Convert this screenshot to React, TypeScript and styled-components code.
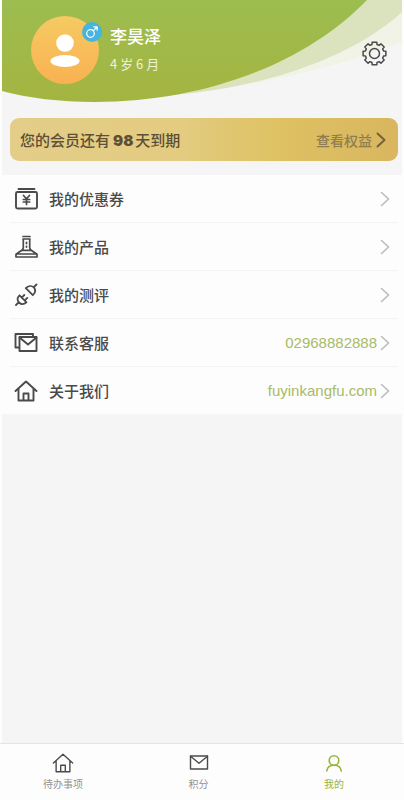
import React from "react";
import styled, { createGlobalStyle } from "styled-components";

const GlobalStyle = createGlobalStyle`
  * { box-sizing: border-box; }
  body {
    margin: 0;
    background: #fdfdfd;
    font-family: Inter, "Noto Sans CJK SC", sans-serif;
    color: #4a4a4a;
  }
  h1, p, ul { margin: 0; padding: 0; }
  button { font: inherit; color: inherit; background: none; border: 0; padding: 0; cursor: pointer; }
  a { color: inherit; text-decoration: none; }
  svg { display: block; flex: none; }
`;

const Page = styled.div`
  display: flex;
  flex-direction: column;
  min-height: 100vh;
  padding: 0 2px;
`;

const Main = styled.main`
  flex: 1;
  background: #f5f5f5;
`;

const Header = styled.header`
  position: relative;
  display: flex;
  align-items: flex-start;
  height: 118px;
  padding: 16px 15px 0 29px;
`;

const Backdrop = styled.svg`
  position: absolute;
  inset: 0;
  width: 100%;
  height: 110px;
`;

const AvatarWrap = styled.div`
  position: relative;
  width: 68px;
  height: 68px;
`;

const GenderBadge = styled.span`
  position: absolute;
  top: 6px;
  right: -3px;
  display: grid;
  place-items: center;
  width: 20px;
  height: 20px;
  border-radius: 50%;
  background: #46b4dc;
`;

const Profile = styled.div`
  position: relative;
  flex: 1;
  margin-left: 11px;
  padding-top: 8px;
  color: #fff;
`;

const Name = styled.h1`
  font-size: 17px;
  line-height: 26px;
  font-weight: 500;
`;

const Age = styled.p`
  margin-top: 3px;
  font-family: "Noto Sans CJK SC", sans-serif;
  font-size: 13px;
  line-height: 22px;
  color: #eef3d3;
`;

const SettingsButton = styled.button`
  position: relative;
  margin-top: 25px;
`;

const MemberCard = styled.section`
  display: flex;
  align-items: center;
  justify-content: space-between;
  height: 43px;
  margin: 0 4px 14px 8px;
  padding: 0 12px 0 10px;
  border-radius: 9px;
  background: linear-gradient(90deg, #e4cd88 0%, #e3cb80 45%, #dec263 68%, #d9b65f 100%);
  font-size: 15px;
  font-weight: 500;
  color: #5c4f36;
`;

const Days = styled.strong`
  margin: 0 2px 0 3px;
  font-weight: 900;
`;

const BenefitsLink = styled.a`
  display: flex;
  align-items: center;
  gap: 4px;
  font-size: 14px;
  font-weight: 500;
  color: #8f7d50;
`;

const Menu = styled.ul`
  list-style: none;
  background: #fdfdfd;
`;

const MenuItem = styled.li`
  margin: 0 4px 0 8px;
  & + & { border-top: 1px solid #f4f4f4; }
`;

const MenuLink = styled.a`
  display: flex;
  align-items: center;
  height: 47px;
  padding: 0 8px 0 4px;
`;

const MenuLabel = styled.span`
  flex: 1;
  margin-left: 11px;
  font-size: 15px;
  font-weight: 500;
`;

const MenuValue = styled.span`
  margin-right: 3px;
  font-family: "Liberation Sans", Arial, sans-serif;
  font-size: 15px;
  color: #a8bb66;
`;

const TabBar = styled.nav`
  display: flex;
  justify-content: space-between;
  height: 57px;
  margin: 0 -2px;
  padding: 0 50px 0 43px;
  border-top: 1px solid #e4e4e4;
`;

const Tab = styled.button<{ $active?: boolean }>`
  width: 40px;
  display: flex;
  flex-direction: column;
  align-items: center;
  padding-top: 8px;
  font-size: 10px;
  line-height: 16px;
  white-space: nowrap;
  color: ${(p) => (p.$active ? "#98b43f" : "#929292")};
  svg { margin-bottom: 2px; color: ${(p) => (p.$active ? "#98b43f" : "#4a4a4a")}; }
`;

const stroke = (width: number) => ({
  fill: "none",
  stroke: "currentColor",
  strokeWidth: width,
  strokeLinecap: "round" as const,
  strokeLinejoin: "round" as const,
  "aria-hidden": true,
});

const Chevron = ({ color = "#b9b9be", width = 1.5 }: { color?: string; width?: number }) => (
  <svg width="10" height="16" viewBox="0 0 10 16" {...stroke(width)} stroke={color}>
    <path d="M1.5 1.5 8.5 8l-7 6.5" />
  </svg>
);

const CouponIcon = () => (
  <svg width="24" height="24" viewBox="0 0 24 24" {...stroke(1.9)}>
    <path d="M4.500 2h16" />
    <rect x="2" y="5" width="21" height="16.500" rx="1.5" />
    <path d="m9.500 8.500 3 3.300 3-3.300M12.500 12v5.500M9.300 12.500h6.400M9.300 15h6.400" strokeWidth="1.7" />
  </svg>
);

const ProductIcon = () => (
  <svg width="24" height="24" viewBox="0 0 24 24" {...stroke(1.7)}>
    <path d="M9 1.500h7M9 4h7M9.300 4v8.500c0 1.200-.5 2-1.500 2.700L2 19.200v2.800h21v-2.800l-5.800-4c-1-.7-1.500-1.500-1.500-2.700V4M8 15.300h9M2.500 19h20" />
    <path d="M12.500 7.500v1M12.500 11.500v.6" strokeWidth="1.8" />
  </svg>
);

const PlugIcon = () => (
  <svg width="24" height="24" viewBox="0 0 24 24" {...stroke(1.8)}>
    <path d="m2 22 2.500-2.500M5.500 12.300l7 7c-2.400 2-5.500 2.200-7.500.2s-2-4.800.5-7.200ZM8 14.300l2.300-2.300M11 17.200l2.300-2.300" />
    <path d="m22.500 1.500-2.500 2.500M11.800 5.200l7 7c2.500-2.400 3-5.500 1-7.800-2.200-2-5.500-1.700-8 .8Z" />
  </svg>
);

const MessagesIcon = () => (
  <svg width="24" height="24" viewBox="0 0 24 24" {...stroke(1.9)}>
    <path d="M5 16.500H1.500V3h17.500v2.500" />
    <rect x="5.500" y="6" width="17" height="14" />
    <path d="m5.500 6.500 8.500 7 8.500-7" />
  </svg>
);

const HouseIcon = ({ size = 24, width = 1.9 }: { size?: number; width?: number }) => (
  <svg width={size} height={size} viewBox="0 0 24 24" {...stroke(width)}>
    <path d="M1.5 12 12 2.5 22.5 12M4.5 9.8v11.7h15V9.8M9.5 21.5v-7h5v7" />
  </svg>
);

const MailIcon = () => (
  <svg width="22" height="22" viewBox="0 0 22 22" {...stroke(1.4)}>
    <rect x="2.500" y="4" width="17" height="13" />
    <path d="m2.500 4.300 8.500 7 8.500-7" />
  </svg>
);

const PersonIcon = () => (
  <svg width="22" height="22" viewBox="0 0 22 22" {...stroke(1.6)}>
    <circle cx="11" cy="8.500" r="4.800" />
    <path d="M3.800 19c.4-3.600 2.900-5.700 7.200-5.700s6.800 2.100 7.200 5.700" />
  </svg>
);

const gearPath = (() => {
  const points: string[] = [];
  for (let i = 0; i < 8; i++) {
    const base = (i * Math.PI) / 4 - Math.PI / 2;
    [[-0.27, 9.4], [-0.2, 11.6], [0.2, 11.6], [0.27, 9.4]].forEach(([offset, r]) => {
      const x = 12.5 + r * Math.cos(base + offset);
      const y = 12.5 + r * Math.sin(base + offset);
      points.push(`${x.toFixed(2)} ${y.toFixed(2)}`);
    });
  }
  return `M${points.join("L")}Z`;
})();

const GearIcon = () => (
  <svg width="25" height="25" viewBox="0 0 25 25" {...stroke(1.5)}>
    <path d={gearPath} />
    <circle cx="12.5" cy="12.5" r="5" />
  </svg>
);

const Avatar = () => (
  <svg width="68" height="68" viewBox="0 0 68 68" role="img" aria-label="头像">
    <defs>
      <linearGradient id="avatar" x1="0" y1="0" x2="0" y2="1">
        <stop offset="0" stopColor="#f6ca62" />
        <stop offset="1" stopColor="#f9b152" />
      </linearGradient>
    </defs>
    <circle cx="34" cy="34" r="34" fill="url(#avatar)" />
    <circle cx="34" cy="27" r="8.800" fill="#fff" />
    <ellipse cx="34" cy="45" rx="14.500" ry="6" fill="#fff" />
  </svg>
);

const menu = [
  { label: "我的优惠券", icon: <CouponIcon /> },
  { label: "我的产品", icon: <ProductIcon /> },
  { label: "我的测评", icon: <PlugIcon /> },
  { label: "联系客服", icon: <MessagesIcon />, value: "02968882888" },
  { label: "关于我们", icon: <HouseIcon />, value: "fuyinkangfu.com" },
];

export default function App() {
  return (
    <>
      <GlobalStyle />
      <Page>
        <Main>
          <Header>
            <Backdrop viewBox="0 0 400 110" preserveAspectRatio="none" aria-hidden>
              <defs>
                <linearGradient id="hill" x1="0" y1="0" x2="0" y2="1">
                  <stop offset="0" stopColor="#9cbd50" />
                  <stop offset="1" stopColor="#a5b440" />
                </linearGradient>
              </defs>
              <path d="M180 94C270 84 350 62 400 42V0H300Z" fill="#f0f3e6" />
              <path d="M170 95C260 88 350 58 400 12V0H300Z" fill="#dae3bd" />
              <path d="M0 0H365C305 62 205 102 92 102C58 102 26 98 0 91Z" fill="url(#hill)" />
            </Backdrop>
            <AvatarWrap>
              <Avatar />
              <GenderBadge>
                <svg width="14" height="14" viewBox="0 0 14 14" {...stroke(1.2)} stroke="#fff">
                  <circle cx="5.500" cy="8.500" r="3.800" />
                  <path d="m8.200 5.800 4-4M8.800 1.800h3.400v3.400" />
                </svg>
              </GenderBadge>
            </AvatarWrap>
            <Profile>
              <Name>李昊泽</Name>
              <Age>4 岁 6 月</Age>
            </Profile>
            <SettingsButton aria-label="设置">
              <GearIcon />
            </SettingsButton>
          </Header>
          <MemberCard>
            <p>
              您的会员还有<Days>98</Days>天到期
            </p>
            <BenefitsLink href="#benefits">
              查看权益
              <Chevron color="#75613a" width={2} />
            </BenefitsLink>
          </MemberCard>
          <Menu>
            {menu.map((item) => (
              <MenuItem key={item.label}>
                <MenuLink href="#">
                  {item.icon}
                  <MenuLabel>{item.label}</MenuLabel>
                  {item.value && <MenuValue>{item.value}</MenuValue>}
                  <Chevron />
                </MenuLink>
              </MenuItem>
            ))}
          </Menu>
        </Main>
        <TabBar>
          <Tab>
            <HouseIcon size={22} width={1.5} />
            待办事项
          </Tab>
          <Tab>
            <MailIcon />
            积分
          </Tab>
          <Tab $active aria-current="page">
            <PersonIcon />
            我的
          </Tab>
        </TabBar>
      </Page>
    </>
  );
}
